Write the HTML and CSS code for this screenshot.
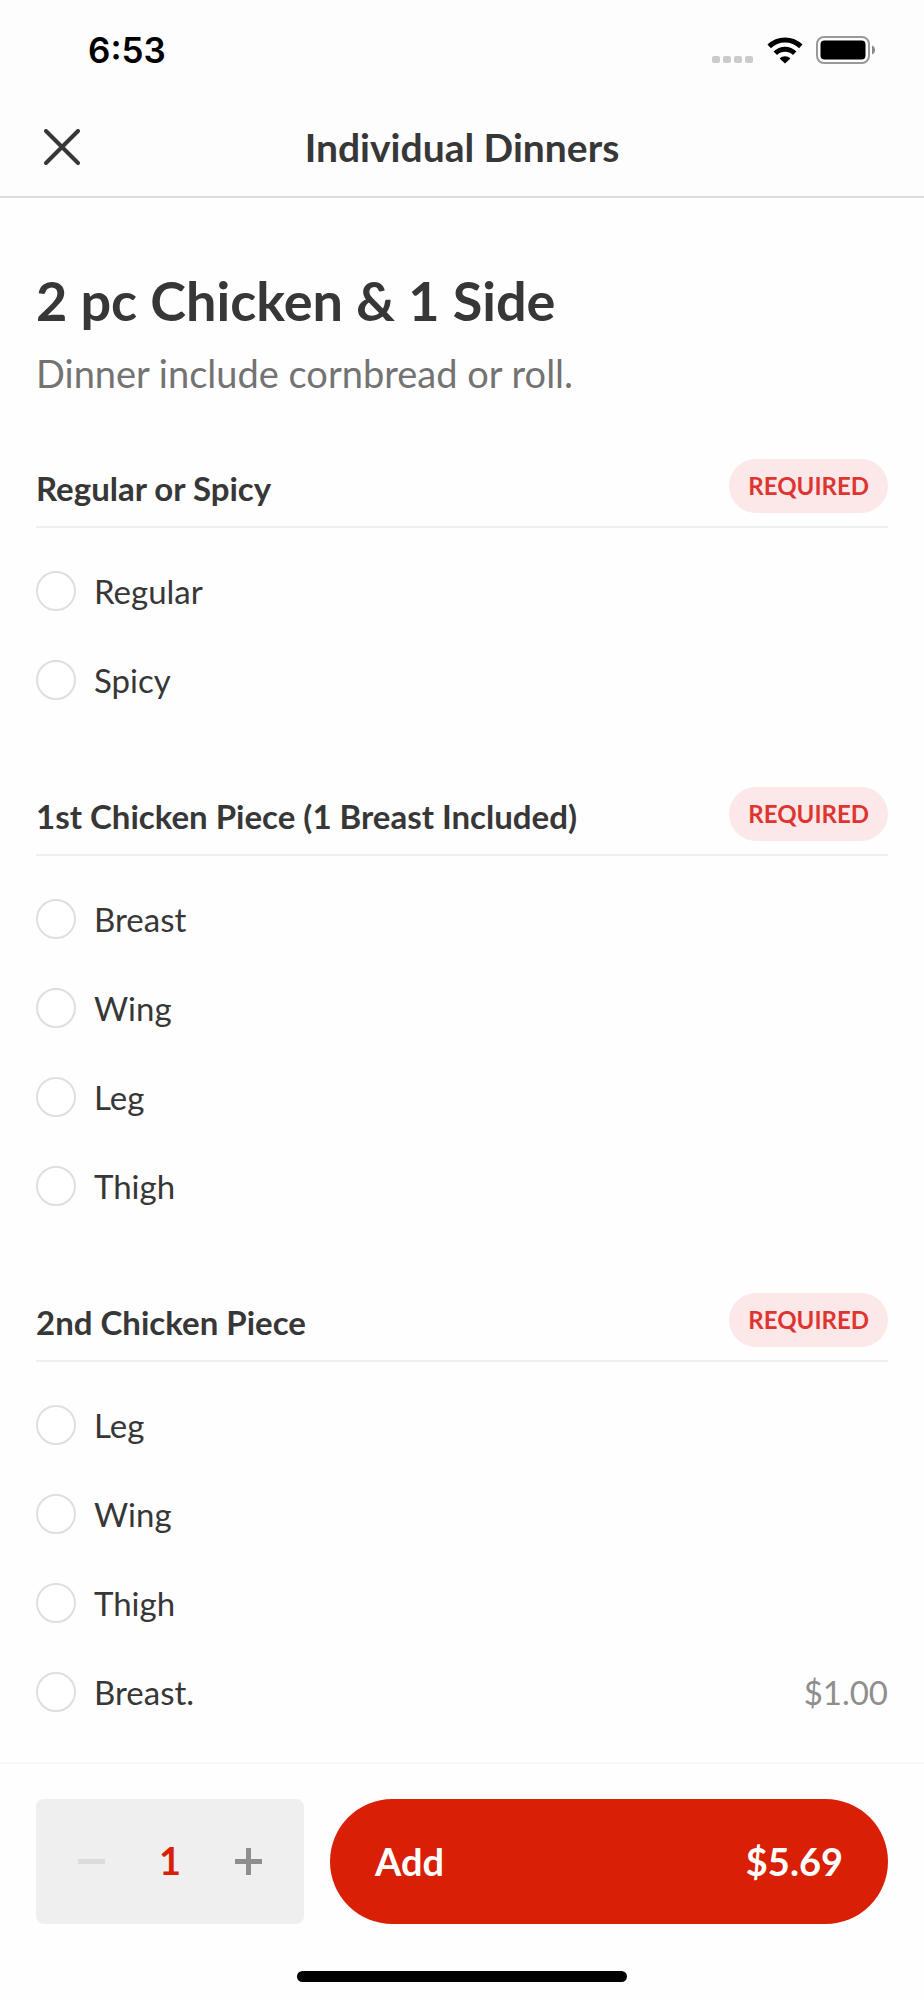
FILE: index.html
```
<!DOCTYPE html>
<html lang="en">
<head>
  <meta charset="UTF-8" />
  <meta name="viewport" content="width=device-width, initial-scale=1" />
  <title>Individual Dinners</title>
  <link rel="stylesheet" href="styles.css">
</head>
<body>
  <header class="top">
    <div class="status-bar">
      <span class="time">6:53</span>
      <div class="status-icons">
        <svg class="signal" width="42" height="8" viewBox="0 0 42 8" fill="#cbcbcb">
          <rect x="0" y="0" width="8" height="7" rx="2" />
          <rect x="11" y="0" width="8" height="7" rx="2" />
          <rect x="22" y="0" width="8" height="7" rx="2" />
          <rect x="33" y="0" width="8" height="7" rx="2" />
        </svg>
        <svg width="36" height="27" viewBox="0 0 36 27" fill="none" stroke="#000" stroke-width="5">
          <path d="M2.2 9.4C11 .8 25 .8 33.8 9.4" />
          <path d="M8.3 16.2C13.8 10.9 22.2 10.9 27.7 16.2" />
          <path d="M18 26.6L12.6 21.4C15.6 18.6 20.4 18.6 23.4 21.4Z" fill="#000" stroke="none" />
        </svg>
        <svg width="60" height="28" viewBox="0 0 60 28">
          <rect x="1" y="1" width="52" height="26" rx="7" fill="none" stroke="#999" stroke-width="2" />
          <rect x="4.5" y="4.5" width="45" height="19" rx="4" fill="#000" />
          <path d="M56 9.5C60 11 60 17 56 18.5Z" fill="#888" />
        </svg>
      </div>
    </div>
    <div class="nav">
      <button class="close" type="button" aria-label="Close">
        <svg width="36" height="36" viewBox="0 0 36 36" fill="none" stroke="#373737" stroke-width="4" stroke-linecap="round">
          <path d="M2 2L34 34M34 2L2 34" />
        </svg>
      </button>
      <h2>Individual Dinners</h2>
    </div>
  </header>

  <main>
    <h1>2 pc Chicken &amp; 1 Side</h1>
    <p class="description">Dinner include cornbread or roll.</p>

    <section class="group" role="radiogroup" aria-labelledby="style-title">
      <div class="group-head">
        <h3 id="style-title">Regular or Spicy</h3>
        <span class="required">REQUIRED</span>
      </div>
      <label class="option"><input type="radio" name="style"><span>Regular</span></label>
      <label class="option"><input type="radio" name="style"><span>Spicy</span></label>
    </section>

    <section class="group" role="radiogroup" aria-labelledby="first-title">
      <div class="group-head">
        <h3 id="first-title">1st Chicken Piece (1 Breast Included)</h3>
        <span class="required">REQUIRED</span>
      </div>
      <label class="option"><input type="radio" name="first"><span>Breast</span></label>
      <label class="option"><input type="radio" name="first"><span>Wing</span></label>
      <label class="option"><input type="radio" name="first"><span>Leg</span></label>
      <label class="option"><input type="radio" name="first"><span>Thigh</span></label>
    </section>

    <section class="group" role="radiogroup" aria-labelledby="second-title">
      <div class="group-head">
        <h3 id="second-title">2nd Chicken Piece</h3>
        <span class="required">REQUIRED</span>
      </div>
      <label class="option"><input type="radio" name="second"><span>Leg</span></label>
      <label class="option"><input type="radio" name="second"><span>Wing</span></label>
      <label class="option"><input type="radio" name="second"><span>Thigh</span></label>
      <label class="option"><input type="radio" name="second"><span>Breast.</span><span class="price">$1.00</span></label>
    </section>
  </main>

  <footer>
    <div class="actions">
      <div class="stepper">
        <button type="button" id="minus" aria-label="Remove one" disabled>
          <svg width="27" height="27" viewBox="0 0 27 27" fill="none" stroke="currentColor" stroke-width="5">
            <path d="M0 13.5H27" />
          </svg>
        </button>
        <output id="count">1</output>
        <button type="button" id="plus" aria-label="Add one">
          <svg width="27" height="27" viewBox="0 0 27 27" fill="none" stroke="currentColor" stroke-width="5">
            <path d="M0 13.5H27M13.5 0V27" />
          </svg>
        </button>
      </div>
      <button class="add" type="button"><span>Add</span><span id="total">$5.69</span></button>
    </div>
    <div class="home-bar"></div>
  </footer>

  <script>
    const price = 5.69;
    let count = 1;

    const minus = document.getElementById('minus');
    const plus = document.getElementById('plus');

    function setCount(n) {
      count = n;
      document.getElementById('count').textContent = count;
      document.getElementById('total').textContent = '$' + (price * count).toFixed(2);
      minus.disabled = count === 1;
    }

    minus.addEventListener('click', () => setCount(count - 1));
    plus.addEventListener('click', () => setCount(count + 1));
  </script>
</body>
</html>
```

FILE: styles.css
```
* {
  box-sizing: border-box;
}
body {
  margin: 0;
  min-height: 100vh;
  display: flex;
  flex-direction: column;
  font-family: Lato, "Open Sans", sans-serif;
  color: #373737;
  background: #fefefe;
}
h1, h2, h3, p {
  margin: 0;
}
button {
  font: inherit;
  border: none;
  background: none;
  padding: 0;
  cursor: pointer;
}
svg {
  display: block;
}

/* Header */
.top {
  background: #fdfdfd;
  border-bottom: 2px solid #dcdcdc;
}
.status-bar {
  display: flex;
  justify-content: space-between;
  align-items: center;
  height: 100px;
  padding: 0 48px 0 88px;
}
.time {
  font-family: Inter, sans-serif;
  font-size: 35px;
  font-weight: 600;
  color: #000;
}
.status-icons {
  display: flex;
  align-items: center;
  gap: 13px;
}
.signal {
  align-self: flex-end;
}
.nav {
  display: grid;
  grid-template-columns: 1fr auto 1fr;
  align-items: center;
  height: 96px;
  padding: 0 44px 3px;
}
.close {
  justify-self: start;
}
h2 {
  font-size: 39px;
  line-height: 46px;
}

/* Item */
main {
  flex: 1;
  padding: 71px 36px 0;
}
h1 {
  font-size: 54px;
  line-height: 64px;
}
.description {
  margin: 17px 0 63px;
  font-size: 38px;
  line-height: 46px;
  color: #737373;
}
.group {
  margin-bottom: 63px;
}
.group:last-child {
  margin-bottom: 20px;
}
.group-head {
  display: flex;
  justify-content: space-between;
  align-items: flex-start;
  height: 69px;
  margin-bottom: 18px;
  border-bottom: 2px solid #efefef;
}
h3 {
  padding-top: 9px;
  font-size: 33px;
  line-height: 40px;
}
.required {
  padding: 0 19px;
  border-radius: 27px;
  font-size: 24px;
  font-weight: bold;
  line-height: 54px;
  color: #de3530;
  background: #fde8e9;
}
.option {
  display: flex;
  align-items: center;
  gap: 18px;
  height: 89px;
  font-size: 33px;
  line-height: 40px;
  cursor: pointer;
}
.option input {
  appearance: none;
  width: 40px;
  height: 40px;
  margin: 0;
  border: 2px solid #dfdfdf;
  border-radius: 50%;
  background: #fff;
}
.option input:checked {
  border: 12px solid #d91f06;
}
.price {
  margin-left: auto;
  color: #8e8e8e;
}

/* Bottom bar */
footer {
  position: sticky;
  bottom: 0;
  padding: 35px 36px 18px;
  border-top: 2px solid #f8f8f8;
  background: #fefefe;
}
.actions {
  display: flex;
  gap: 26px;
  height: 125px;
}
.stepper {
  display: grid;
  grid-template-columns: repeat(3, 1fr);
  align-items: center;
  justify-items: center;
  width: 268px;
  padding: 0 16px;
  border-radius: 8px;
  background: #efefef;
}
.stepper button {
  color: #8e8e8e;
}
.stepper button:disabled {
  color: #dcdcdc;
}
.stepper output {
  padding-bottom: 4px;
  font-size: 38px;
  font-weight: bold;
  color: #d91f06;
}
.add {
  flex: 1;
  display: flex;
  justify-content: space-between;
  align-items: center;
  padding: 0 45px 2px;
  border-radius: 63px;
  font-size: 38px;
  font-weight: bold;
  color: #fff;
  background: #d91f06;
}
.home-bar {
  width: 330px;
  height: 11px;
  margin: 47px auto 0;
  border-radius: 6px;
  background: #000;
}
```
